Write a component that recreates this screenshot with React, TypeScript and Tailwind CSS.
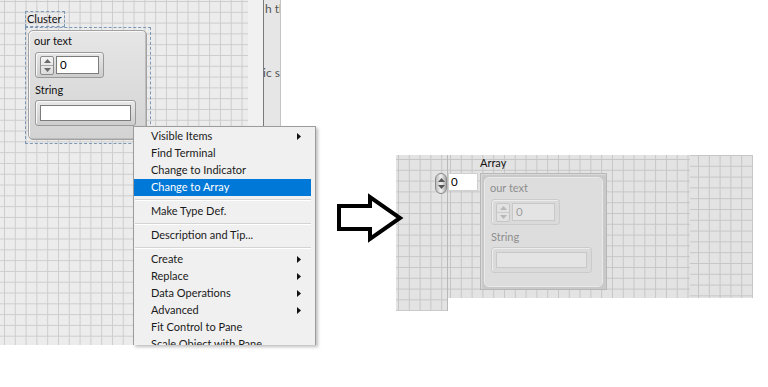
import React from "react";

const leftGrid =
  "bg-[#ececec] bg-[linear-gradient(to_right,#cdcdcd_1px,transparent_1px),linear-gradient(to_bottom,#cdcdcd_1px,transparent_1px)] bg-size-[10.8px_10.8px] bg-position-[4px_1px]";
const rightGrid =
  "bg-[#e3e3e3] bg-[linear-gradient(to_right,#c6c6c6_1px,transparent_1px),linear-gradient(to_bottom,#c6c6c6_1px,transparent_1px)] bg-size-[10.8px_10.8px] bg-position-[2px_4px]";
const rightGridB =
  "bg-[#e3e3e3] bg-[linear-gradient(to_right,#c6c6c6_1px,transparent_1px),linear-gradient(to_bottom,#c6c6c6_1px,transparent_1px)] bg-size-[10.8px_10.8px] bg-position-[8px_0px]";

function Tri({ dir, color }: { dir: "up" | "down" | "right"; color: string }) {
  const pts = dir === "up" ? "0,4 3.5,0 7,4" : dir === "down" ? "0,0 3.5,4 7,0" : "0,0 4,3.5 0,7";
  const w = dir === "right" ? 4 : 7;
  const h = dir === "right" ? 7 : 4;
  return (
    <svg width={w} height={h} viewBox={`0 0 ${w} ${h}`}>
      <polygon points={pts} fill={color} />
    </svg>
  );
}

function Spinner({ dim }: { dim?: boolean }) {
  const c = dim ? "#b8b8b8" : "#6a6a6a";
  return (
    <div
      className={`flex h-[19px] w-[14px] flex-col rounded-[2px] border ${
        dim ? "border-[#c6c6c6] bg-[#e2e2e2]" : "border-[#8c8c8c] bg-[linear-gradient(#f4f4f4,#dcdcdc)]"
      }`}
    >
      <div className={`flex flex-1 items-center justify-center border-b ${dim ? "border-[#cccccc]" : "border-[#a8a8a8]"}`}>
        <Tri dir="up" color={c} />
      </div>
      <div className="flex flex-1 items-center justify-center">
        <Tri dir="down" color={c} />
      </div>
    </div>
  );
}

function Numeric({ dim }: { dim?: boolean }) {
  return (
    <div
      className={`flex h-[26px] w-[69px] items-center gap-[2px] rounded-[3px] border px-[4px] ${
        dim
          ? "border-[#cbcbcb] bg-[#dadada] shadow-[inset_1px_1px_0_#ececec]"
          : "border-[#9a9a9a] bg-[linear-gradient(#e8e8e8,#cdcdcd)] shadow-[inset_1px_1px_0_#fafafa]"
      }`}
    >
      <Spinner dim={dim} />
      <div
        className={`flex h-[18px] flex-1 items-center border pl-[3px] text-[11.5px] ${
          dim ? "border-[#c8c8c8] bg-[#e4e4e4] text-[#a0a0a0]" : "border-[#7c7c7c] bg-white text-black"
        }`}
      >
        0
      </div>
    </div>
  );
}

function StringCtl({ dim }: { dim?: boolean }) {
  return (
    <div
      className={`h-[26px] w-[101px] rounded-[3px] border p-[4px] ${
        dim
          ? "border-[#cbcbcb] bg-[#dadada] shadow-[inset_1px_1px_0_#ececec]"
          : "border-[#9a9a9a] bg-[linear-gradient(#e8e8e8,#cdcdcd)] shadow-[inset_1px_1px_0_#fafafa]"
      }`}
    >
      <div className={`h-full w-full border ${dim ? "border-[#c8c8c8] bg-[#e4e4e4]" : "border-[#7c7c7c] bg-white"}`} />
    </div>
  );
}

function Cluster({ dim }: { dim?: boolean }) {
  const label = dim ? "text-[#8e8e8e]" : "text-[#111]";
  return (
    <div
      className={`flex h-[110px] w-[119px] flex-col rounded-[5px] border pl-[5px] pt-[2px] ${
        dim
          ? "border-[#e9e9e9] bg-[#dddddd]"
          : "border-[#a2a2a2] bg-[linear-gradient(#e6e6e6,#d3d3d3)] shadow-[inset_1px_1px_0_#f8f8f8,inset_-1px_-1px_0_#bdbdbd]"
      }`}
    >
      <div className={`h-[16px] text-[11px] leading-[16px] ${label}`}>our text</div>
      <div className="ml-[1px] mt-[3px]">
        <Numeric dim={dim} />
      </div>
      <div className={`ml-[1px] mt-[4px] h-[16px] text-[11px] leading-[16px] ${label}`}>String</div>
      <div className="ml-[1px] mt-[2px]">
        <StringCtl dim={dim} />
      </div>
    </div>
  );
}

const items: { label: string; sub?: boolean; sepBefore?: boolean; active?: boolean }[] = [
  { label: "Visible Items", sub: true },
  { label: "Find Terminal" },
  { label: "Change to Indicator" },
  { label: "Change to Array", active: true },
  { label: "Make Type Def.", sepBefore: true },
  { label: "Description and Tip...", sepBefore: true },
  { label: "Create", sub: true, sepBefore: true },
  { label: "Replace", sub: true },
  { label: "Data Operations", sub: true },
  { label: "Advanced", sub: true },
  { label: "Fit Control to Pane" },
  { label: "Scale Object with Pane" },
];

function ContextMenu() {
  return (
    <div className="absolute left-[133px] top-[126px] h-[219px] w-[183px] overflow-hidden border-x border-t border-[#9c9c9c] bg-[#f0f0f0] pt-[1px] shadow-[2px_2px_3px_rgba(0,0,0,0.25)]">
      {items.map((it) => (
        <React.Fragment key={it.label}>
          {it.sepBefore && (
            <div className="flex h-[7px] items-center pl-[1px] pr-[4px]">
              <div className="h-[2px] w-full border-t border-b border-t-[#d4d4d4] border-b-white" />
            </div>
          )}
          <div
            className={`mr-[4px] flex h-[17px] items-center pb-[1px] pl-[17px] pr-[10px] text-[11px] ${
              it.active ? "bg-[#0078d7] text-white" : "text-[#1a1a1a]"
            }`}
          >
            <span className="flex-1 whitespace-nowrap">{it.label}</span>
            {it.sub && <Tri dir="right" color="#111" />}
          </div>
        </React.Fragment>
      ))}
    </div>
  );
}

export default function App() {
  return (
    <div className="flex h-[387px] w-[768px] items-start overflow-hidden bg-white font-['Lato',sans-serif]">
      {/* before */}
      <div className="relative flex h-[345px] w-[281px] shrink-0">
        <div className={`h-full w-[248px] pl-[25px] pt-[11px] ${leftGrid}`}>
          <div className="h-[16px] w-fit border border-dashed border-[#7c98b4] pl-[1px] pr-[2px] text-[11px] leading-[14px] text-[#111]">
            Cluster
          </div>
          <div className="h-[117px] w-[126px] border border-dashed border-[#7c98b4] p-[2px]">
            <Cluster />
          </div>
        </div>
        <div className="h-full w-[15px] bg-[#f1f1f1]" />
        <div className="h-full w-[18px] overflow-hidden border-x border-l-[#7a7a7a] border-r-[#c4c4c4] bg-[#e6e6e6] text-[12px] leading-[16px] text-[#555]">
          <div className="ml-[1px] mt-[1px] whitespace-nowrap">h th</div>
          <div className="-ml-[1px] mt-[48px] whitespace-nowrap">ic s</div>
        </div>
        <ContextMenu />
      </div>

      {/* arrow */}
      <div className="relative z-10 ml-[54px] mt-[192px] w-[61px] shrink-0">
        <svg width="72" height="52" viewBox="0 0 72 52" className="overflow-visible">
          <polygon
            points="4,14 35,14 35,5 65,26 35,47 35,37 4,37"
            fill="white"
            stroke="black"
            strokeWidth="4"
            strokeLinejoin="miter"
          />
        </svg>
      </div>

      {/* after */}
      <div className="mt-[155px] flex shrink-0 items-start">
        <div className={`h-[156px] w-[52px] border-r border-[#b8b8b8] pl-[39px] pt-[18px] ${rightGrid}`}>
          <div className="flex h-[21px] w-[12px] flex-col items-center justify-center gap-[3px] rounded-full border border-[#8a8a8a] bg-[linear-gradient(to_right,#bdbdbd,#f2f2f2,#a9a9a9)]">
            <Tri dir="up" color="#555" />
            <Tri dir="down" color="#555" />
          </div>
        </div>
        <div className={`flex h-[143px] w-[242px] items-start ${rightGrid}`}>
          <div className="mt-[18px] flex h-[18px] w-[30px] items-center border border-[#d0d0d0] bg-white pl-[2px] text-[11.5px] text-black">
            0
          </div>
          <div className="ml-[2px] flex flex-col">
            <div className="h-[18px] text-[11px] leading-[16px] text-[#111]">Array</div>
            <div className="h-[117px] w-[127px] border border-[#b7b7b7] bg-[#c9c9c9] p-[3px] shadow-[inset_1px_1px_0_#dadada]">
              <Cluster dim />
            </div>
          </div>
        </div>
        <div className={`h-[143px] w-[63px] ${rightGridB}`} />
      </div>
    </div>
  );
}
